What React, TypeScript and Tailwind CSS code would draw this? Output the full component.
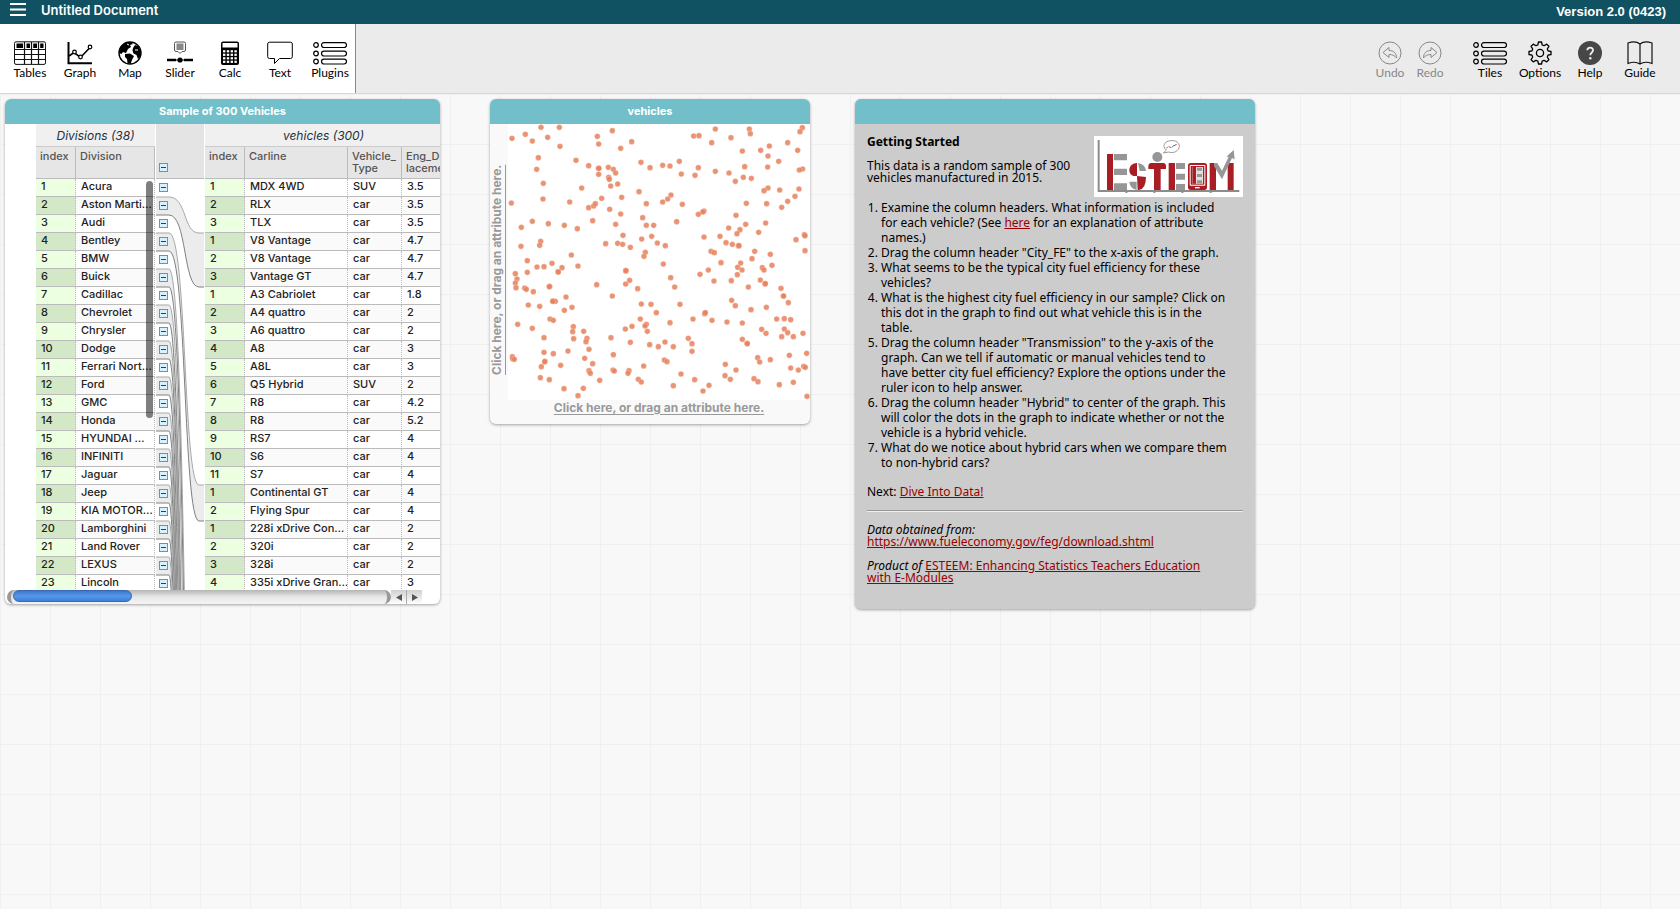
import React from "react";

type IconProps = { name: string };

const lineIcon = { fill: "none", stroke: "currentColor", strokeWidth: 1 };

function ListIcon() {
  return (
    <svg width="34" height="24" viewBox="0 0 34 24" {...lineIcon} strokeWidth={1.2} aria-hidden="true">
      {[4, 12.5, 20.5].map((y) => (
        <g key={y}>
          <circle cx="3" cy={y} r="2.3" />
          <rect x="8.5" y={y - 2.3} width="25" height="4.8" rx="2.4" />
        </g>
      ))}
    </svg>
  );
}

function Icon({ name }: IconProps) {
  switch (name) {
    case "Tables":
      return (
        <svg width="32" height="24" viewBox="0 0 32 24" aria-hidden="true">
          <rect x="0.5" y="0.8" width="31" height="22.6" rx="1.5" fill="#fff" stroke="#111" />
          <path d="M1 8.5H31M1 13.5H31M1 18.5H31M10.5 1V23M17.5 1V23M24.5 1V23" stroke="#111" strokeWidth="1.2" />
          <path d="M2.500 2.500H9V7H2.500ZM12.500 2.500H16V7H12.500ZM19.200 2.500H23V7H19.200ZM26.200 2.500H29.500V7H26.200Z" fill="#000" />
        </svg>
      );
    case "Graph":
      return (
        <svg width="26" height="24" viewBox="0 0 26 24" fill="none" stroke="#000" aria-hidden="true">
          <path d="M1.5 1V22.3H25" strokeWidth="2" />
          <path d="M2 15L7 11.5L13.5 16.5L23 6.5" strokeWidth="1.6" />
          <g fill="#fff" strokeWidth="1.2">
            <circle cx="7.5" cy="11" r="1.8" />
            <circle cx="13.5" cy="16" r="1.8" />
            <circle cx="23" cy="6" r="1.8" />
          </g>
        </svg>
      );
    case "Map":
      return (
        <svg width="24" height="24" viewBox="0 0 24 24" aria-hidden="true">
          <circle cx="12" cy="12" r="11" fill="#fff" stroke="#000" strokeWidth="1.4" />
          <path d="M2 7C5 2 10 1 13 1.3L15 3L12 4L13 6L10 8L8 12L5 11L3.5 13L1 12Z" fill="#000" />
          <path d="M7 13L12 12.5L16 15L14 19L12.5 23L9.5 22L9 18L7 16Z" fill="#000" />
          <path d="M15 7L17 4L20 5L23 10L22.5 15L20 18L18.5 14L15.5 12.5L14.5 9.5Z" fill="#000" />
          <path d="M9 3L11 4M17 9L20 9" stroke="#fff" strokeWidth="1" />
        </svg>
      );
    case "Slider":
      return (
        <svg width="26" height="24" viewBox="0 0 26 24" aria-hidden="true">
          <path d="M9 1H17Q18.5 1 18.5 2.500V9Q18.500 10.500 17 10.500H15L13 12.500L11 10.500H9Q7.500 10.500 7.500 9V2.500Q7.500 1 9 1Z" fill="#fff" stroke="#555" />
          <rect x="9.500" y="2.500" width="7" height="6.500" fill="#888" />
          <path d="M0 19H9M17 19H26" stroke="#000" strokeWidth="2.600" />
          <path d="M9 19H17" stroke="#000" strokeWidth="1" />
          <circle cx="13" cy="19" r="2.600" fill="#000" />
        </svg>
      );
    case "Calc":
      return (
        <svg width="18" height="24" viewBox="0 0 18 24" aria-hidden="true">
          <rect x="0" y="0.500" width="18" height="23.500" rx="2" fill="#000" />
          <rect x="1.500" y="2" width="15" height="4.500" fill="#fff" />
          {[9.2, 12.7, 16.2, 19.7].map((y) =>
            [2, 5.8, 9.6, 13.4].map((x) => (
              <rect key={`${x}-${y}`} x={x} y={y} width="2.400" height="2.200" fill="#fff" />
            )),
          )}
        </svg>
      );
    case "Text":
      return (
        <svg width="26" height="24" viewBox="0 0 26 24" {...lineIcon} aria-hidden="true">
          <path d="M2.500 1.200H23.500Q25.300 1.200 25.300 3V15.700Q25.300 17.500 23.500 17.500H12.500L7.500 22.500V17.500H2.500Q0.700 17.500 0.700 15.700V3Q0.700 1.200 2.500 1.200Z" />
        </svg>
      );
    case "Undo":
    case "Redo":
      return (
        <svg width="24" height="24" viewBox="0 0 24 24" {...lineIcon} aria-hidden="true">
          <circle cx="12" cy="12" r="11" />
          <path
            transform={name === "Redo" ? "translate(24 0) scale(-1 1)" : undefined}
            d="M5 11.500L11 6.500V9.500C15.500 9.500 18.500 12 18.500 17C16.500 14.500 14.500 13.500 11 13.500V16.500Z"
          />
        </svg>
      );
    case "Options":
      return (
        <svg width="24" height="24" viewBox="0 0 24 24" {...lineIcon} strokeWidth={1.3} aria-hidden="true">
          <circle cx="12" cy="12" r="3.600" />
          <path d="M10.500 1H13.500L14.200 4L16 4.700L18.700 3.100L20.900 5.300L19.300 8L20 9.800L23 10.500V13.500L20 14.200L19.300 16L20.900 18.700L18.700 20.900L16 19.300L14.200 20L13.500 23H10.500L9.800 20L8 19.300L5.300 20.900L3.100 18.700L4.700 16L4 14.200L1 13.500V10.500L4 9.800L4.700 8L3.100 5.300L5.300 3.100L8 4.700L9.800 4Z" strokeLinejoin="round" />
        </svg>
      );
    case "Help":
      return (
        <svg width="24" height="24" viewBox="0 0 24 24" aria-hidden="true">
          <circle cx="12" cy="12" r="12" fill="#474747" />
          <path d="M9.300 9.300C9.300 5.800 15 5.800 15 9.300C15 11.500 12.300 11.500 12.300 14.300" fill="none" stroke="#eee" strokeWidth="1.800" />
          <circle cx="12.300" cy="17.200" r="1.200" fill="#eee" />
        </svg>
      );
    case "Guide":
      return (
        <svg width="26" height="24" viewBox="0 0 26 24" fill="none" stroke="#111" strokeWidth="1.200" aria-hidden="true">
          <path d="M13 3C10 0.500 5 0.500 1 2V22.500C5 21 10 21 13 23C16 21 21 21 25 22.500V2C21 0.500 16 0.500 13 3ZM13 3V23" />
        </svg>
      );
    default:
      return <ListIcon />;
  }
}

function Tool({ name, narrow, muted }: { name: string; narrow?: boolean; muted?: boolean }) {
  return (
    <button
      type="button"
      className={`flex flex-col items-center pt-[17px] font-[Lato,sans-serif] text-[12px] leading-4 ${narrow ? "w-10" : "w-[50px]"} ${muted ? "text-[#888]" : "text-black"}`}
    >
      <Icon name={name} />
      <span>{name}</span>
    </button>
  );
}

const divisions = [
  "Acura", "Aston Marti…", "Audi", "Bentley", "BMW", "Buick", "Cadillac", "Chevrolet", "Chrysler", "Dodge",
  "Ferrari Nort…", "Ford", "GMC", "Honda", "HYUNDAI …", "INFINITI", "Jaguar", "Jeep", "KIA MOTOR…",
  "Lamborghini", "Land Rover", "LEXUS", "Lincoln",
];

const cars: [number, string, string, string][] = [
  [1, "MDX 4WD", "SUV", "3.5"],
  [2, "RLX", "car", "3.5"],
  [3, "TLX", "car", "3.5"],
  [1, "V8 Vantage", "car", "4.7"],
  [2, "V8 Vantage", "car", "4.7"],
  [3, "Vantage GT", "car", "4.7"],
  [1, "A3 Cabriolet", "car", "1.8"],
  [2, "A4 quattro", "car", "2"],
  [3, "A6 quattro", "car", "2"],
  [4, "A8", "car", "3"],
  [5, "A8L", "car", "3"],
  [6, "Q5 Hybrid", "SUV", "2"],
  [7, "R8", "car", "4.2"],
  [8, "R8", "car", "5.2"],
  [9, "RS7", "car", "4"],
  [10, "S6", "car", "4"],
  [11, "S7", "car", "4"],
  [1, "Continental GT", "car", "4"],
  [2, "Flying Spur", "car", "4"],
  [1, "228i xDrive Con…", "car", "2"],
  [2, "320i", "car", "2"],
  [3, "328i", "car", "2"],
  [4, "335i xDrive Gran…", "car", "3"],
];

const groupSizes = [3, 3, 11, 2, 24, 5, 8, 18, 4, 8, 3, 17, 12, 8, 10, 9, 6, 11, 9, 2, 5, 10, 6];

const ROW = 18;

function curve(row: number, child: number) {
  const y1 = row * ROW;
  const y2 = child * ROW;
  return `M0 ${y1}H13C31 ${y1} 27 ${y2} 43 ${y2}H48`;
}

function Relations() {
  const ends: number[] = [];
  groupSizes.reduce((sum, size) => {
    ends.push(sum + size);
    return sum + size;
  }, 0);
  return (
    <svg className="absolute inset-0 h-full w-full" fill="none" aria-hidden="true">
      {ends.map((end, i) => {
        if (i % 2 === 0) return null;
        const y1 = (i + 1) * ROW;
        const y2 = end * ROW;
        return (
          <path
            key={i}
            d={`${curve(i, ends[i - 1])}V${y2}H43C27 ${y2} 31 ${y1} 13 ${y1}H0Z`}
            fill="#ececec"
          />
        );
      })}
      {ends.map((end, i) => (
        <path key={i} d={curve(i + 1, end)} stroke={i % 2 ? "#808080" : "#a8a8a8"} />
      ))}
    </svg>
  );
}

function Toggle({ label }: { label: string }) {
  return (
    <button
      type="button"
      aria-label={label}
      className="flex h-[9px] w-[9px] shrink-0 items-center justify-center border border-[#8a8a8a] bg-[#d8f1ff]"
    >
      <span className="h-px w-[5px] bg-[#004a8f]" />
    </button>
  );
}

const headCell = "h-8 border-b border-[#bbb] bg-[#e6e6e6] pl-1 pt-[3px] align-top text-left font-medium text-[#555] leading-3 overflow-hidden";
const cell = "h-[18px] border-b border-[#bbb] p-0 pl-[5px] align-top leading-[15px] overflow-hidden whitespace-nowrap";
const indexCell = "border-r border-r-[#bbb] border-dotted border-b-[#bbb] [border-bottom-style:solid]";
const caption = "h-[23px] border-b border-[#ccc] bg-[#f0f0f0] pt-1 text-[12px] leading-4 font-normal italic text-[#1d3040]";

function DivisionTable() {
  return (
    <table className="w-[119px] shrink-0 table-fixed border-separate border-spacing-0 self-start">
      <caption className={caption}>Divisions (38)</caption>
      <colgroup>
        <col className="w-10" />
        <col />
      </colgroup>
      <thead>
        <tr>
          <th scope="col" className={`${headCell} border-r`}>index</th>
          <th scope="col" className={`${headCell} border-r`}>Division</th>
        </tr>
      </thead>
      <tbody>
        {divisions.map((name, i) => (
          <tr key={name} className={i % 2 ? "bg-[#fafafa]" : "bg-white"}>
            <td className={`${cell} ${indexCell} ${i % 2 ? "bg-[#d3e8c6]" : "bg-[#ecffe0]"}`}>{i + 1}</td>
            <td className={`${cell} ${indexCell}`}>{name}</td>
          </tr>
        ))}
      </tbody>
    </table>
  );
}

function VehicleTable() {
  return (
    <table className="w-[257px] shrink-0 table-fixed border-separate border-spacing-0 self-start">
      <caption className={`pr-5 ${caption}`}>vehicles (300)</caption>
      <colgroup>
        <col className="w-10" />
        <col className="w-[103px]" />
        <col className="w-[54px]" />
        <col />
      </colgroup>
      <thead>
        <tr>
          <th scope="col" className={`${headCell} border-r`}>index</th>
          <th scope="col" className={`${headCell} border-r`}>Carline</th>
          <th scope="col" className={`${headCell} border-r`}>Vehicle_<br />Type</th>
          <th scope="col" className={headCell}>Eng_Disp<br />lacement</th>
        </tr>
      </thead>
      <tbody>
        {cars.map(([index, carline, type, size], i) => (
          <tr key={i} className={i % 2 ? "bg-[#fafafa]" : "bg-white"}>
            <td className={`${cell} ${indexCell} ${i % 2 ? "bg-[#d3e8c6]" : "bg-[#ecffe0]"}`}>{index}</td>
            <td className={`${cell} ${indexCell}`}>{carline}</td>
            <td className={`${cell} ${indexCell}`}>{type}</td>
            <td className={cell}>{size}</td>
          </tr>
        ))}
      </tbody>
    </table>
  );
}

function Panel({ title, className, children }: { title: string; className: string; children: React.ReactNode }) {
  return (
    <section className={`absolute top-[5px] flex flex-col overflow-hidden rounded-md shadow-[0_1px_3px_rgba(0,0,0,0.35)] ${className}`}>
      <h2 className="h-[25px] shrink-0 bg-[#72bfca] text-center font-[Inter,sans-serif] text-[11px] leading-6 font-bold text-white">
        {title}
      </h2>
      {children}
    </section>
  );
}

function TablePanel() {
  return (
    <Panel title="Sample of 300 Vehicles" className="left-[5px] w-[435px] bg-white">
      <div className="relative flex h-[466px] overflow-hidden pl-[31px] font-[Inter,sans-serif] text-[11px] font-medium text-[#222]">
        <DivisionTable />
        <div className="flex w-[50px] shrink-0 flex-col px-px">
          <div className="flex h-[55px] shrink-0 items-end border-b border-[#bbb] bg-[#e4e4e4] pb-1.5 pl-[3px]">
            <Toggle label="Collapse all groups" />
          </div>
          <div className="relative flex-1">
            <Relations />
            <div className="relative flex flex-col pl-[3px]">
              {divisions.map((name) => (
                <div key={name} className="flex h-[18px] shrink-0 items-start pt-1">
                  <Toggle label={`Collapse ${name}`} />
                </div>
              ))}
            </div>
          </div>
        </div>
        <VehicleTable />
        <div className="absolute top-[57px] left-[141px] h-[237px] w-[7px] rounded-full bg-black/50" />
      </div>
      <div className="flex h-[14px] pr-[18px] pl-0.5">
        <div className="flex-1 rounded-full border-x-4 border-[#999] bg-linear-to-b from-[#b5b5b5] via-[#e8e8e8] to-[#f4f4f4] pl-0.5">
          <div className="h-3 w-[119px] rounded-md border border-[#3a68b4] bg-linear-to-b from-[#3b78cc] via-[#5698ea] to-[#3f80d8]" />
        </div>
        <button type="button" aria-label="Scroll left" className="flex w-4 items-center justify-center border-r border-[#aaa] bg-linear-to-b from-[#d0d0d0] to-white">
          <svg width="6" height="7" aria-hidden="true"><path d="M6 0V7L0 3.500Z" fill="#555" /></svg>
        </button>
        <button type="button" aria-label="Scroll right" className="flex w-[15px] items-center justify-center bg-linear-to-b from-[#d0d0d0] to-white">
          <svg width="6" height="7" aria-hidden="true"><path d="M0 0V7L6 3.500Z" fill="#555" /></svg>
        </button>
      </div>
    </Panel>
  );
}

// Plot coordinates are in thirds of a pixel.
const leftPoints = [
  [168, 97], [223, 97], [121, 118], [81, 130], [142, 138], [188, 127], [225, 154], [160, 188], [155, 223], [273, 196],
  [311, 212], [175, 265], [174, 312], [290, 279], [79, 324], [254, 321], [311, 338], [326, 333], [331, 326], [350, 310],
  [337, 124], [341, 147], [382, 107], [440, 140], [407, 160], [468, 202], [495, 218], [340, 220], [342, 220], [341, 238],
  [370, 217], [385, 223], [392, 234], [371, 247], [373, 253], [377, 273], [398, 267], [462, 290], [410, 307], [484, 326],
  [374, 343], [407, 357], [473, 368], [323, 377], [392, 388], [484, 391], [142, 379], [190, 386], [109, 397], [238, 391],
  [277, 401], [414, 421], [470, 432], [500, 424], [362, 446], [398, 445], [413, 448], [436, 457], [167, 439], [164, 451],
  [108, 454], [259, 480], [481, 472], [477, 484], [127, 497], [156, 516], [177, 515], [201, 505], [231, 518], [219, 530],
  [220, 531], [279, 513], [127, 532], [91, 536], [96, 552], [91, 564], [93, 578], [119, 579], [124, 583], [145, 590],
  [194, 574], [193, 575], [422, 527], [423, 527], [434, 556], [422, 567], [335, 569], [458, 581], [382, 603], [243, 606],
  [204, 618], [211, 619], [203, 619], [130, 630], [164, 634], [261, 637], [238, 646], [469, 627], [498, 628], [195, 672],
  [205, 676], [98, 688], [142, 700], [265, 695], [263, 710], [266, 731], [296, 709], [306, 730], [303, 740], [177, 728],
  [378, 728], [421, 702], [441, 694], [466, 672], [484, 688], [480, 693], [487, 709], [436, 742], [494, 749], [312, 763],
  [249, 768], [177, 772], [205, 776], [82, 785], [83, 791], [88, 793], [180, 799], [179, 800], [169, 815], [227, 811],
  [299, 790], [323, 806], [385, 779], [312, 827], [316, 835], [384, 825], [388, 828], [432, 827], [429, 835], [476, 813],
  [460, 853], [469, 861], [344, 856], [166, 848], [193, 854], [237, 881], [295, 880], [279, 902],
];

const rightPoints = [
  [196, 102], [131, 123], [147, 122], [185, 143], [243, 128], [298, 102], [301, 116], [457, 98], [450, 110], [413, 143],
  [443, 166], [358, 153], [332, 166], [354, 183], [277, 168], [386, 199], [353, 216], [284, 215], [88, 199], [38, 211],
  [60, 213], [145, 218], [94, 237], [135, 241], [196, 229], [237, 234], [280, 247], [304, 250], [256, 259], [458, 222],
  [448, 225], [354, 279], [342, 287], [389, 285], [447, 282], [435, 304], [413, 319], [395, 337], [350, 326], [289, 325],
  [63, 300], [53, 312], [38, 321], [97, 328], [162, 348], [158, 351], [145, 358], [258, 361], [80, 380], [11, 391],
  [287, 388], [347, 384], [236, 399], [270, 404], [261, 416], [326, 412], [463, 419], [465, 422], [438, 434], [465, 467],
  [210, 424], [162, 426], [22, 444], [46, 452], [228, 443], [247, 448], [265, 452], [267, 452], [183, 469], [193, 473],
  [314, 469], [306, 491], [361, 478], [366, 511], [337, 518], [342, 525], [331, 555], [345, 566], [346, 566], [40, 507],
  [213, 503], [272, 504], [263, 517], [276, 525], [262, 539], [175, 525], [150, 538], [62, 548], [74, 576], [192, 558],
  [244, 557], [295, 576], [393, 580], [400, 603], [401, 603], [415, 623], [349, 637], [303, 644], [245, 616], [256, 632],
  [90, 628], [19, 653], [164, 656], [166, 653], [129, 672], [186, 676], [60, 683], [231, 681], [277, 684], [380, 672],
  [403, 671], [422, 674], [403, 702], [413, 713], [395, 725], [430, 725], [459, 715], [335, 703], [348, 715], [277, 733],
  [291, 745], [292, 746], [115, 730], [126, 746], [126, 769], [45, 741], [25, 755], [70, 755], [43, 795], [51, 800],
  [470, 775], [418, 781], [361, 794], [323, 788], [329, 801], [226, 808], [258, 825], [422, 819], [445, 825], [461, 814],
  [466, 817], [225, 842], [241, 853], [312, 851], [324, 860], [430, 862], [388, 869], [93, 837], [134, 854], [177, 871],
  [70, 872], [159, 888], [471, 904],
];

function Dots({ points, shift }: { points: number[][]; shift: number }) {
  return (
    <>
      {points.map(([x, y], i) => (
        <circle key={i} cx={x + shift} cy={y} r="8.500" />
      ))}
    </>
  );
}

function GraphPanel() {
  const axis = "font-[Inter,sans-serif] text-[12px] font-bold text-[#999] underline underline-offset-2";
  return (
    <Panel title="vehicles" className="left-[490px] w-80 bg-[#f9f9f9]">
      <div className="flex h-[276px]">
        <button type="button" className={`w-[18px] rotate-180 pb-4 pl-1 text-center leading-3 [writing-mode:vertical-rl] ${axis}`}>
          Click here, or drag an attribute here.
        </button>
        <svg className="flex-1 bg-white" viewBox="69 87 906 828" role="img" aria-label="Scatter of vehicles">
          <g fill="#e6805b" fillOpacity="0.85" stroke="#fff" strokeOpacity="0.5" strokeWidth="1.500">
            <Dots points={leftPoints} shift={0} />
            <Dots points={rightPoints} shift={495} />
          </g>
        </svg>
      </div>
      <button type="button" className={`h-6 pb-2 pl-[18px] leading-4 ${axis}`}>Click here, or drag an attribute here.</button>
    </Panel>
  );
}

function EsteemLogo() {
  return (
    <svg className="float-right h-[61px] w-[149px] bg-white" viewBox="0 0 447 183" role="img" aria-label="ESTEEM logo">
      <path d="M14 12V165H436M97 165V171M181 165V171M265 165V171M350 165V171" fill="none" stroke="#8c8c8c" strokeWidth="6" />
      <g fill="#a91e25">
        <path d="M39 54H57V162H39ZM224 81H243V162H224Z" />
        <path d="M129 81C116 81 106 90 106 103Q106 116 118 120L129 120ZM129 120L156 123Q156 160 134 162L131 162Z" />
        <path d="M170 81H208Q216 82 216 90V99H200V162H180V99H163V90Q163 82 170 81Z" />
        <rect x="282" y="81" width="57" height="81" rx="8" />
        <path d="M347 81H366V162H347ZM401 81H419V162H401Z" />
      </g>
      <g fill="#969696">
        <path d="M60 54H99V73H60ZM60 98H99V117H60ZM60 142H99V162H60Z" />
        <circle cx="190" cy="63" r="15" />
        <path d="M132 81Q154 84 156 105H137ZM106 137H128V162Q108 158 106 137Z" />
        <path d="M246 81H273V99H246ZM246 113H273V131H246ZM246 144H273V162H246Z" />
        <path d="M360 81H370L384 104L404 62L397 62L419 42L422 70L414 66L384 130L360 90Z" />
      </g>
      <rect x="287" y="87" width="47" height="62" rx="3" fill="#fff" />
      <rect x="290" y="90" width="41" height="56" fill="#a91e25" />
      <path d="M294 93H327V143H294Z" fill="#e8dede" />
      <path d="M295 93H306V143H295Z" fill="#a91e25" />
      <path d="M309 95H324V104H309ZM309 114H324V123H309ZM309 133H324V142H309Z" fill="#969696" />
      <rect x="303" y="153" width="14" height="4" fill="#fff" />
      <path d="M217 42L208 51L224 48C238 54 256 44 256 31C256 19 245 13 233 14C218 14 209 22 210 31Q210 37 217 42Z" fill="#fff" stroke="#999" strokeWidth="3" />
      <path d="M216 37L224 32" stroke="#e08030" strokeWidth="3" />
      <path d="M225 32L232 35" stroke="#4aa04a" strokeWidth="3" />
      <path d="M233 34L240 28" stroke="#4a80c0" strokeWidth="3" />
      <path d="M240 29L248 25" stroke="#c04040" strokeWidth="3" />
    </svg>
  );
}

const link = "text-[#990000] underline";

function GuidePanel() {
  return (
    <Panel title="" className="left-[855px] w-[400px] bg-[#ccc]">
      <div className="px-3 pt-3 pb-[25px] font-['Noto_Sans',sans-serif] text-[12px] leading-3 text-black">
        <EsteemLogo />
        <h3 className="font-bold">Getting Started</h3>
        <p className="mt-3">
          This data is a random sample of 300<br />vehicles manufactured in 2015.
        </p>
        <ol className="mt-4 list-decimal pl-[14px] leading-[15px] whitespace-nowrap">
          <li>
            Examine the column headers. What information is included<br />
            for each vehicle? (See <a className={link} href="#attributes">here</a> for an explanation of attribute<br />
            names.)
          </li>
          <li>Drag the column header "City_FE" to the x-axis of the graph.</li>
          <li>What seems to be the typical city fuel efficiency for these<br />vehicles?</li>
          <li>
            What is the highest city fuel efficiency in our sample? Click on<br />
            this dot in the graph to find out what vehicle this is in the<br />
            table.
          </li>
          <li>
            Drag the column header "Transmission" to the y-axis of the<br />
            graph. Can we tell if automatic or manual vehicles tend to<br />
            have better city fuel efficiency? Explore the options under the<br />
            ruler icon to help answer.
          </li>
          <li>
            Drag the column header "Hybrid" to center of the graph. This<br />
            will color the dots in the graph to indicate whether or not the<br />
            vehicle is a hybrid vehicle.
          </li>
          <li>What do we notice about hybrid cars when we compare them<br />to non-hybrid cars?</li>
        </ol>
        <p className="mt-4">Next: <a className={link} href="#dive">Dive Into Data!</a></p>
        <hr className="mt-3 border-t border-b border-t-[#999] border-b-[#eee]" />
        <p className="mt-3">
          <em>Data obtained from:</em><br />
          <a className={link} href="https://www.fueleconomy.gov/feg/download.shtml">https://www.fueleconomy.gov/feg/download.shtml</a>
        </p>
        <p className="mt-3">
          <em>Product of</em>{" "}
          <a className={link} href="#esteem">ESTEEM: Enhancing Statistics Teachers Education<br />with E-Modules</a>
        </p>
      </div>
    </Panel>
  );
}

export default function App() {
  return (
    <div className="flex min-h-screen flex-col bg-[#f8f8f8]">
      <header className="flex h-6 shrink-0 items-center justify-between bg-[#105262] pr-[14px] pl-2.5 text-white">
        <div className="flex items-center gap-[15px]">
          <button type="button" aria-label="Menu" className="mb-1.5">
            <svg width="16" height="13" aria-hidden="true"><path d="M0 1H16M0 6.500H16M0 12H16" stroke="#fff" strokeWidth="2" /></svg>
          </button>
          <h1 className="mb-1 font-[Inter,sans-serif] text-[13px] leading-4 font-semibold">Untitled Document</h1>
        </div>
        <span className="font-['Liberation_Sans',sans-serif] text-[13px] leading-4 font-bold">Version 2.0 (0423)</span>
      </header>
      <nav className="flex h-[70px] shrink-0 justify-between border-b border-[#d8d8d8] bg-[#ebebeb]">
        <div className="flex border-r border-[#888] bg-white pl-[5px]">
          {["Tables", "Graph", "Map", "Slider", "Calc", "Text", "Plugins"].map((name) => (
            <Tool key={name} name={name} />
          ))}
        </div>
        <div className="flex pr-[15px]">
          <Tool name="Undo" narrow muted />
          <Tool name="Redo" narrow muted />
          <div className="flex pl-[15px]">
            {["Tiles", "Options", "Help", "Guide"].map((name) => (
              <Tool key={name} name={name} />
            ))}
          </div>
        </div>
      </nav>
      <main className="relative flex-1 bg-[linear-gradient(to_right,#f0f0f0_1px,transparent_1px),linear-gradient(to_bottom,#f0f0f0_1px,transparent_1px)] bg-[size:50px_50px]">
        <TablePanel />
        <GraphPanel />
        <GuidePanel />
      </main>
    </div>
  );
}
